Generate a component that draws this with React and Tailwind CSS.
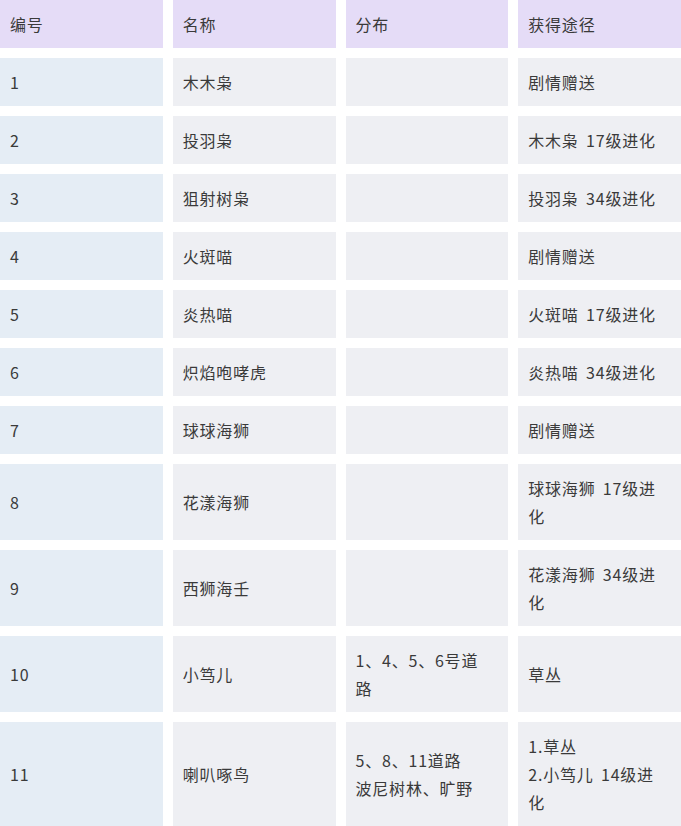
import React from "react";

const rows = [
  ["1", "木木枭", "", ["剧情赠送"]],
  ["2", "投羽枭", "", ["木木枭 17级进化"]],
  ["3", "狙射树枭", "", ["投羽枭 34级进化"]],
  ["4", "火斑喵", "", ["剧情赠送"]],
  ["5", "炎热喵", "", ["火斑喵 17级进化"]],
  ["6", "炽焰咆哮虎", "", ["炎热喵 34级进化"]],
  ["7", "球球海狮", "", ["剧情赠送"]],
  ["8", "花漾海狮", "", ["球球海狮 17级进", "化"]],
  ["9", "西狮海壬", "", ["花漾海狮 34级进", "化"]],
  ["10", "小笃儿", ["1、4、5、6号道", "路"], ["草丛"]],
  ["11", "喇叭啄鸟", ["5、8、11道路", "波尼树林、旷野"], ["1.草丛", "2.小笃儿 14级进", "化"]],
];

function Lines({ v }) {
  if (!v) return null;
  if (typeof v === "string") return <span>{v}</span>;
  return (
    <div className="flex flex-col">
      {v.map((l, i) => (
        <span key={i} className="whitespace-pre">{l}</span>
      ))}
    </div>
  );
}

function Cell({ children, bg }) {
  return (
    <div className={`flex items-center px-[10px] py-[10px] leading-[28px] ${bg}`}>
      {children}
    </div>
  );
}

export default function App() {
  return (
    <div
      className="w-[681px] h-[826px] overflow-hidden bg-white text-[16px] tracking-[0.8px] [word-spacing:3px] text-[#3a3a3a]"
      style={{ fontFamily: '"Noto Sans CJK SC", "Noto Sans", sans-serif' }}
    >
      <div className="grid grid-cols-4 gap-[10px]">
        {["编号", "名称", "分布", "获得途径"].map((h) => (
          <Cell key={h} bg="bg-[#e5dcf7]">
            <span>{h}</span>
          </Cell>
        ))}
        {rows.map((r) => (
          <React.Fragment key={r[0]}>
            <Cell bg="bg-[#e5edf5]">
              <span>{r[0]}</span>
            </Cell>
            <Cell bg="bg-[#eeeff3]">
              <span>{r[1]}</span>
            </Cell>
            <Cell bg="bg-[#eeeff3]">
              <Lines v={r[2]} />
            </Cell>
            <Cell bg="bg-[#eeeff3]">
              <Lines v={r[3]} />
            </Cell>
          </React.Fragment>
        ))}
      </div>
    </div>
  );
}
